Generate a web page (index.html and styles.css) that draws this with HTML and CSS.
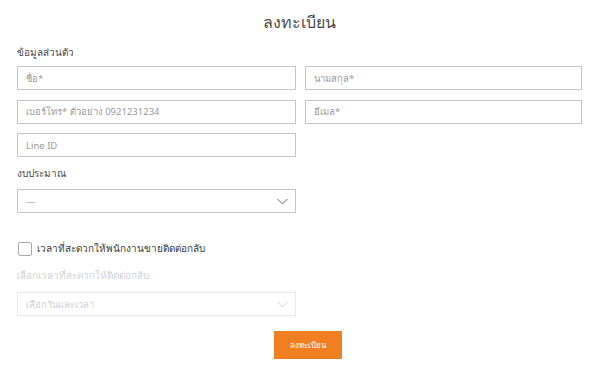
FILE: index.html
```html
<!DOCTYPE html>
<html>
<head>
    <link rel="stylesheet" href="styles.css">
</head>
<body>
    <div class="register">
        <h1>ลงทะเบียน</h1>
        <div class="section-label">ข้อมูลส่วนตัว</div>
        <div class="form-grid">
            <div class="field"><span class="placeholder">ชื่อ*</span></div>
            <div class="field"><span class="placeholder">นามสกุล*</span></div>
            <div class="field"><span class="placeholder">เบอร์โทร* ตัวอย่าง 0921231234</span></div>
            <div class="field"><span class="placeholder">อีเมล*</span></div>
            <div class="field"><span class="placeholder">Line ID</span></div>
        </div>
        <div class="section-label budget-label">งบประมาณ</div>
        <div class="half">
            <div class="field select">
                <span class="placeholder">---</span>
                <svg class="chevron" width="11" height="7" viewBox="0 0 11 7"><path d="M0.5 1 L5.5 6 L10.5 1" fill="none" stroke="#666" stroke-width="1"/></svg>
            </div>
        </div>
        <label class="check-row">
            <span class="checkbox"></span>
            เวลาที่สะดวกให้พนักงานขายติดต่อกลับ
        </label>
        <div class="section-label disabled-label">เลือกเวลาที่สะดวกให้ติดต่อกลับ</div>
        <div class="half">
            <div class="field select disabled">
                <span class="placeholder">เลือกวันและเวลา</span>
                <svg class="chevron" width="11" height="7" viewBox="0 0 11 7"><path d="M0.5 1 L5.5 6 L10.5 1" fill="none" stroke="#d0d0d0" stroke-width="1"/></svg>
            </div>
        </div>
        <div class="actions">
            <button>ลงทะเบียน</button>
        </div>
    </div>
</body>
</html>
```

FILE: styles.css
```css
body {
    margin: 0;
    background: #fff;
    font-family: "Noto Sans", "DejaVu Sans", sans-serif;
    color: #333;
}
.register {
    padding: 10px 18px 0 17px;
}
h1 {
    margin: 0;
    text-align: center;
    font-size: 16px;
    font-weight: normal;
    line-height: 24px;
    color: #4a4a4a;
}
.section-label {
    font-size: 10px;
    line-height: 14px;
    margin-top: 11px;
    margin-bottom: 7px;
    color: #4a4a4a;
}
.form-grid {
    display: grid;
    grid-template-columns: 279px 277px;
    column-gap: 9px;
    row-gap: 9.5px;
}
.field {
    height: 24px;
    box-sizing: border-box;
    border: 1px solid #c6c6c6;
    display: flex;
    align-items: center;
    padding: 0 8px;
    font-size: 9.5px;
}
.placeholder {
    color: #9a9a9a;
}
.half {
    width: 279px;
}
.select {
    justify-content: space-between;
    padding-right: 7px;
}
.budget-label {
    margin-top: 9px;
    margin-bottom: 9px;
}
.check-row {
    display: flex;
    align-items: center;
    gap: 5px;
    margin-top: 28px;
    font-size: 10px;
    color: #3a3a3a;
    padding-left: 1px;
}
.checkbox {
    width: 12px;
    height: 12px;
    border: 1px solid #aaa;
    border-radius: 2px;
}
.disabled-label {
    color: #d2d2d2;
    margin-top: 12px;
    margin-bottom: 10px;
}
.disabled {
    border-color: #e8e8e8;
}
.disabled .placeholder {
    color: #d0d0d0;
}
.actions {
    display: flex;
    justify-content: center;
    margin-top: 15px;
    padding-left: 17px;
}
button {
    width: 68px;
    height: 28px;
    border: none;
    background: #f07f22;
    color: #fff;
    font-family: inherit;
    font-size: 8px;
    padding: 0;
}
```
